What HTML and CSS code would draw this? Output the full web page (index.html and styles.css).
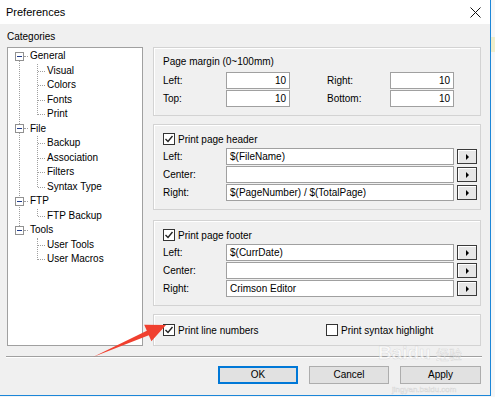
FILE: index.html
```html
<!DOCTYPE html>
<html lang="en">
<head>
    <meta charset="UTF-8">
    <title>Preferences</title>
    <link rel="stylesheet" href="styles.css">
</head>
<body>
<div class="screen">
    <div class="window">
        <div class="titlebar">
            <span>Preferences</span>
            <svg class="close" width="11" height="11" viewBox="0 0 11 11">
                <path d="M0.5 0.5 L10.5 10.5 M10.5 0.5 L0.5 10.5" stroke="#111" stroke-width="1" fill="none"/>
            </svg>
        </div>
        <div class="content">
            <div class="cat-label">Categories</div>
            <div class="main">
                <!-- category tree -->
                <div class="tree">
                    <ul class="roots">
                        <li>
                            <div class="node"><span class="exp"></span>General</div>
                            <ul class="kids">
                                <li>Visual</li>
                                <li>Colors</li>
                                <li>Fonts</li>
                                <li>Print</li>
                            </ul>
                        </li>
                        <li>
                            <div class="node"><span class="exp"></span>File</div>
                            <ul class="kids">
                                <li>Backup</li>
                                <li>Association</li>
                                <li>Filters</li>
                                <li>Syntax Type</li>
                            </ul>
                        </li>
                        <li>
                            <div class="node"><span class="exp"></span>FTP</div>
                            <ul class="kids">
                                <li>FTP Backup</li>
                            </ul>
                        </li>
                        <li>
                            <div class="node"><span class="exp"></span>Tools</div>
                            <ul class="kids">
                                <li>User Tools</li>
                                <li>User Macros</li>
                            </ul>
                        </li>
                    </ul>
                </div>

                <!-- print settings -->
                <div class="panels">
                    <div class="group margins">
                        <div class="title">Page margin (0~100mm)</div>
                        <div class="margin-grid">
                            <span>Left:</span>
                            <div class="field num">10</div>
                            <span></span>
                            <span>Right:</span>
                            <div class="field num">10</div>
                            <span>Top:</span>
                            <div class="field num">10</div>
                            <span></span>
                            <span>Bottom:</span>
                            <div class="field num">10</div>
                        </div>
                    </div>

                    <div class="group print">
                        <div class="check-row"><span class="box checked"></span>Print page header</div>
                        <div class="rows">
                            <span>Left:</span>
                            <div class="field">$(FileName)</div>
                            <span class="pick"></span>
                            <span>Center:</span>
                            <div class="field"></div>
                            <span class="pick"></span>
                            <span>Right:</span>
                            <div class="field">$(PageNumber) / $(TotalPage)</div>
                            <span class="pick"></span>
                        </div>
                    </div>

                    <div class="group print footer">
                        <div class="check-row"><span class="box checked"></span>Print page footer</div>
                        <div class="rows">
                            <span>Left:</span>
                            <div class="field">$(CurrDate)</div>
                            <span class="pick"></span>
                            <span>Center:</span>
                            <div class="field"></div>
                            <span class="pick"></span>
                            <span>Right:</span>
                            <div class="field">Crimson Editor</div>
                            <span class="pick"></span>
                        </div>
                    </div>

                    <div class="group options">
                        <div class="check-row first"><span class="box checked"></span>Print line numbers</div>
                        <div class="check-row"><span class="box"></span>Print syntax highlight</div>
                    </div>
                </div>
            </div>

            <div class="sep"></div>

            <div class="buttons">
                <div class="btn default">OK</div>
                <div class="btn">Cancel</div>
                <div class="btn wide">Apply</div>
            </div>
        </div>
    </div>
    <div class="desk"><div class="desk-note"></div></div>

    <!-- red annotation arrow -->
    <svg class="arrow" width="495" height="397" viewBox="0 0 495 397">
        <polygon points="93,357 146.8,330.7 144.2,324.8 166,325 151.4,341.2 148.8,335.3" fill="#f0402f"/>
    </svg>

    <div class="watermark wm-logo">Baidu <span class="wm-cn">经验</span></div>
    <div class="watermark wm-url">jingyan.baidu.com</div>
</div>
</body>
</html>
```

FILE: styles.css
```css
* {
    margin: 0;
    padding: 0;
    box-sizing: border-box;
}

body {
    background: #f5f5f5;
    font: 10px "Liberation Sans", Arial, sans-serif;
    color: #000;
}

.screen {
    position: relative;
    display: flex;
    width: 495px;
    height: 397px;
    overflow: hidden;
}

.window {
    width: 491px;
    height: 396px;
    flex-shrink: 0;
    display: flex;
    flex-direction: column;
    border-right: 1px solid #1c86d8;
    border-bottom: 1px solid #1c86d8;
}

.titlebar {
    height: 24px;
    background: #fff;
    display: flex;
    align-items: center;
    justify-content: space-between;
    padding: 0 9px 0 6px;
    font-size: 11px;
}

.content {
    flex: 1;
    background: #f0f0f0;
    padding: 6px 9px 0 7px;
}

.cat-label {
    height: 13px;
    line-height: 13px;
}

.main {
    display: flex;
    gap: 10px;
    height: 299px;
    margin-top: 4px;
}

/* tree */
.tree {
    width: 136px;
    border: 1px solid #a0a0a0;
    background: #fff;
    padding: 1px 0 0 7px;
}

.roots,
.kids {
    list-style: none;
    position: relative;
}

.roots::before {
    content: "";
    position: absolute;
    left: 4px;
    top: 7px;
    height: 174px;
    border-left: 1px dotted #a0a0a0;
}

.node,
.kids li {
    height: 14.5px;
    line-height: 14.5px;
    white-space: nowrap;
}

.node {
    display: flex;
    align-items: center;
}

.exp {
    position: relative;
    z-index: 1;
    width: 9px;
    height: 9px;
    border: 1px solid #919191;
    background: #fff;
    margin-right: 6px;
}

.exp::before {
    content: "";
    position: absolute;
    left: 1px;
    top: 3px;
    width: 5px;
    height: 1px;
    background: #203c8c;
}

.exp::after {
    content: "";
    position: absolute;
    left: 8px;
    top: 3px;
    width: 4px;
    border-top: 1px dotted #a0a0a0;
}

.kids {
    padding-left: 32px;
}

.kids::before {
    content: "";
    position: absolute;
    left: 22px;
    top: 0;
    bottom: 7px;
    border-left: 1px dotted #a0a0a0;
}

.kids li {
    position: relative;
}

.kids li::before {
    content: "";
    position: absolute;
    left: -9px;
    top: 7px;
    width: 7px;
    border-top: 1px dotted #a0a0a0;
}

/* right side */
.panels {
    width: 328px;
    display: flex;
    flex-direction: column;
}

.group {
    border: 1px solid #d3d3d3;
    box-shadow: inset 1px 1px 0 #fff;
    padding-left: 9px;
}

.margins {
    height: 69px;
    padding-top: 8px;
}

.margins .title {
    line-height: 12px;
}

.margin-grid {
    display: grid;
    grid-template-columns: 63px 64px 37px 63px 64px;
    grid-auto-rows: 17px;
    row-gap: 1px;
    align-items: center;
    margin-top: 4px;
}

.field {
    height: 17px;
    border: 1px solid #a0a0a0;
    background: #fff;
    line-height: 15px;
    padding: 0 3px;
    white-space: nowrap;
    overflow: hidden;
}

.field.num {
    text-align: right;
}

.print {
    height: 86px;
    margin-top: 8px;
    padding-top: 7px;
}

.print.footer {
    margin-top: 10px;
}

.check-row {
    display: flex;
    align-items: center;
    gap: 3px;
    height: 14px;
}

.box {
    width: 12px;
    height: 12px;
    border: 1px solid #333;
    background: #fff;
}

.box.checked {
    background: #fff url("data:image/svg+xml,%3Csvg xmlns='http://www.w3.org/2000/svg' width='10' height='10'%3E%3Cpath d='M1.5 5 L4 7.5 L8.5 2' stroke='%23222' stroke-width='1.4' fill='none'/%3E%3C/svg%3E") center no-repeat;
}

.rows {
    display: grid;
    grid-template-columns: 63px 228px 23px;
    grid-auto-rows: 17px;
    row-gap: 1px;
    align-items: center;
    margin-top: 2px;
}

.pick {
    width: 20px;
    height: 15px;
    margin-left: 3px;
    border: 1px solid #3a3a3a;
    background: #e6e6e6;
    box-shadow: inset 1px 1px 0 #fff;
    display: flex;
    align-items: center;
    justify-content: center;
}

.pick::after {
    content: "";
    border-left: 3px solid #000;
    border-top: 3px solid transparent;
    border-bottom: 3px solid transparent;
}

.options {
    height: 32px;
    margin-top: 8px;
    padding-top: 8px;
    display: flex;
}

.options .first {
    width: 163px;
}

/* bottom */
.sep {
    margin: 10px -1px 0;
    border-top: 1px solid #a0a0a0;
    border-bottom: 1px solid #fff;
}

.buttons {
    display: flex;
    justify-content: flex-end;
    gap: 11px;
    margin-top: 8px;
}

.btn {
    width: 80px;
    height: 18px;
    border: 1px solid #adadad;
    background: #e1e1e1;
    line-height: 16px;
    text-align: center;
}

.btn.wide {
    width: 81px;
}

.btn.default {
    border-color: #0078d7;
    box-shadow: inset 0 0 0 1px #0078d7;
}

.desk {
    flex: 1;
    background: #f6f6f6;
    padding-top: 37px;
}

.desk-note {
    height: 15px;
    background: #f1eecb;
}

/* overlays */
.arrow {
    position: absolute;
    left: 0;
    top: 0;
    pointer-events: none;
}

.watermark {
    position: absolute;
    color: rgba(255, 255, 255, 0.6);
    -webkit-text-stroke: 0.5px rgba(150, 150, 150, 0.3);
    pointer-events: none;
}

.wm-logo {
    left: 378px;
    top: 342px;
    font: bold 19px "Liberation Sans", Arial, sans-serif;
    line-height: 22px;
}

.wm-cn {
    font: 13px "Noto Sans CJK SC", sans-serif;
}

.wm-url {
    left: 392px;
    top: 385px;
    font-size: 8px;
    line-height: 9px;
}
```
